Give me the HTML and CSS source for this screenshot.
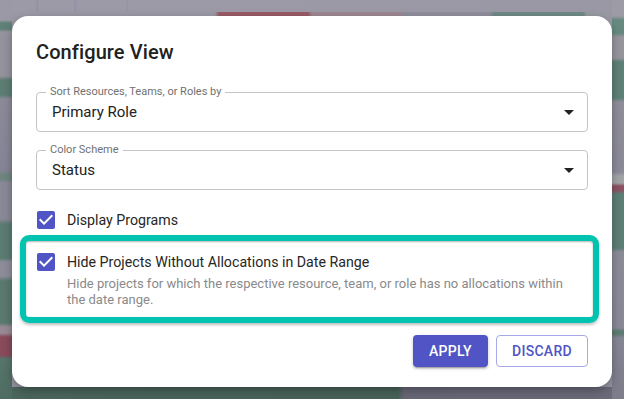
FILE: index.html
```html
<!DOCTYPE html>
<html lang="en">
<head>
<meta charset="utf-8">
<title>Configure View</title>
<link rel="stylesheet" href="styles.css">
</head>
<body>
<div class="backdrop">
  <div class="strip strip-left"></div>
  <div class="strip strip-top"></div>
  <div class="strip strip-right"></div>
  <div class="dialog" role="dialog" aria-labelledby="dlg-title">
    <h2 class="dialog-title" id="dlg-title">Configure View</h2>

    <div class="field field-first">
      <span class="field-label">Sort Resources, Teams, or Roles by</span>
      <span class="field-value">Primary Role</span>
      <svg class="field-arrow" viewBox="0 0 24 24" width="24" height="24"><path d="M7 10l5 5 5-5z"/></svg>
    </div>

    <div class="field field-second">
      <span class="field-label">Color Scheme</span>
      <span class="field-value">Status</span>
      <svg class="field-arrow" viewBox="0 0 24 24" width="24" height="24"><path d="M7 10l5 5 5-5z"/></svg>
    </div>

    <div class="option option-plain">
      <svg class="checkbox" viewBox="0 0 24 24" width="24" height="24"><path d="M19 3H5c-1.11 0-2 .9-2 2v14c0 1.1.89 2 2 2h14c1.11 0 2-.9 2-2V5c0-1.1-.89-2-2-2zm-9 14l-5-5 1.41-1.41L10 14.17l7.59-7.59L19 8l-9 9z"/></svg>
      <div class="option-text">
        <span class="option-label">Display Programs</span>
      </div>
    </div>

    <div class="highlight">
      <div class="option">
        <svg class="checkbox" viewBox="0 0 24 24" width="24" height="24"><path d="M19 3H5c-1.11 0-2 .9-2 2v14c0 1.1.89 2 2 2h14c1.11 0 2-.9 2-2V5c0-1.1-.89-2-2-2zm-9 14l-5-5 1.41-1.41L10 14.17l7.59-7.59L19 8l-9 9z"/></svg>
        <div class="option-text">
          <span class="option-label">Hide Projects Without Allocations in Date Range</span>
          <span class="option-desc">Hide projects for which the respective resource, team, or role has no allocations within the date range.</span>
        </div>
      </div>
    </div>

    <div class="actions">
      <button class="btn btn-primary" type="button">Apply</button>
      <button class="btn btn-outline" type="button">Discard</button>
    </div>
  </div>
  <div class="strip strip-bottom"></div>
</div>
</body>
</html>
```

FILE: styles.css
```css
* { box-sizing: border-box; }

html, body {
  margin: 0;
  padding: 0;
  width: 624px;
  height: 399px;
  overflow: hidden;
  background: #9a98a4;
  font-family: Roboto, "Liberation Sans", Arial, sans-serif;
}

.backdrop {
  display: grid;
  grid-template-columns: 12px 600px 12px;
  grid-template-rows: 16px 371px 12px;
  width: 624px;
  height: 399px;
}

.strip-left {
  grid-column: 1;
  grid-row: 1 / 4;
  background: linear-gradient(to bottom,
    #9b99a5 0px, #9b99a5 20px,
    #5f8177 23px, #5f8177 29px,
    #96949f 32px, #96949f 76px,
    #5e7f75 80px, #5e7f75 95px,
    #8e8c9b 99px, #878698 170px,
    #6f8780 175px, #6f8780 179px,
    #8b8a99 183px, #8b8a99 219px,
    #5c7d73 224px, #5c7d73 258px,
    #8f8e9b 262px, #8f8e9b 276px,
    #5b7b71 281px, #5b7b71 323px,
    #9a8c96 327px, #9a8c96 333px,
    #8a4c5c 337px, #8a4c5c 355px,
    #58776d 359px, #4f6c63 399px);
}

.strip-right {
  grid-column: 3;
  grid-row: 1 / 4;
  background: linear-gradient(to bottom,
    #9d9ba6 0px, #9d9ba6 16px,
    #668a80 20px, #668a80 33px,
    #98969f 37px, #98969f 58px,
    #5f8278 62px, #5f8278 98px,
    #918f9c 102px, #8c8b9a 172px,
    #a3a6a6 176px, #a3a6a6 183px,
    #8e5364 186px, #8e5364 190px,
    #5d8076 194px, #5d8076 248px,
    #8d8c9a 252px, #8b8a99 328px,
    #5f7d74 331px, #5f7d74 334px,
    #888797 338px, #7e7d8c 399px);
}

.strip-top {
  grid-column: 2;
  grid-row: 1;
  background:
    linear-gradient(to right,
      #9b99a5 0px, #9b99a5 203px,
      #9a5a67 207px, #9a5a67 296px,
      #9d8790 300px, #9d8790 388px,
      #8f8e9c 392px, #8f8e9c 478px,
      #6f8984 482px, #6f8984 571px,
      #979aa0 575px, #979aa0 600px) left bottom / 100% 4px no-repeat,
    linear-gradient(to right,
      #9c9aa6 0px, #9c9aa6 24px, #8f8ea0 25px, #9c9aa6 27px,
      #9c9aa6 62px, #8e90b0 63px, #9c9aa6 65px,
      #9c9aa6 114px, #9496a4 115px, #9c9aa6 117px,
      #9c9aa6 200px, #9a98a4 600px);
}

.strip-bottom {
  grid-column: 2;
  grid-row: 3;
  background: linear-gradient(to right,
    #4c685f 0px, #4a665d 386px,
    #6c6b7b 392px, #6e6d7d 600px);
}

.dialog {
  grid-column: 2;
  grid-row: 2;
  background: #ffffff;
  border-radius: 16px;
  padding: 20px 24px 20px 24px;
  display: flex;
  flex-direction: column;
  box-shadow: 0 6px 14px rgba(0, 0, 0, 0.22), 0 2px 5px rgba(0, 0, 0, 0.12);
  position: relative;
  z-index: 1;
}

.dialog-title {
  margin: 0;
  font-size: 20px;
  line-height: 32px;
  font-weight: 500;
  color: #212121;
  letter-spacing: 0.1px;
}

.field {
  position: relative;
  height: 40px;
  border: 1px solid #c4c4c4;
  border-radius: 4px;
  display: flex;
  align-items: center;
  padding: 0 6px 0 15px;
}

.field-first { margin-top: 24px; }
.field-second { margin-top: 18px; }

.field-label {
  position: absolute;
  top: -8px;
  left: 9px;
  padding: 0 4px;
  background: #ffffff;
  font-size: 11px;
  line-height: 13px;
  color: #717171;
  white-space: nowrap;
}

.field-value {
  flex: 1;
  font-size: 15px;
  line-height: 20px;
  color: #222222;
}

.field-arrow {
  fill: #222222;
  flex: none;
}

.option {
  display: flex;
  align-items: flex-start;
  gap: 9px;
}

.option-plain {
  margin-top: 18px;
  margin-left: -2px;
}

.checkbox {
  flex: none;
  fill: #5054c4;
}

.option-text {
  display: flex;
  flex-direction: column;
}

.option-label {
  font-size: 14.2px;
  line-height: 24px;
  color: #262626;
}

.option-desc {
  margin-top: 2px;
  font-size: 13px;
  line-height: 16px;
  color: #8a8a8a;
  max-width: 500px;
}

.highlight {
  margin: 3px -11px 0 -16px;
  border: 6px solid #02c3b0;
  border-radius: 9px;
  padding: 9px 10px 9px 8px;
  box-shadow: 0 2px 3px rgba(0, 0, 0, 0.25), inset 0 1px 2px rgba(0, 0, 0, 0.3);
}

.actions {
  margin-top: 12px;
  display: flex;
  justify-content: flex-end;
  gap: 8px;
}

.btn {
  font-family: Roboto, "Liberation Sans", Arial, sans-serif;
  font-size: 14px;
  font-weight: 500;
  line-height: 20px;
  height: 32px;
  text-transform: uppercase;
  letter-spacing: 0.3px;
  border-radius: 4px;
  cursor: pointer;
}

.btn-primary {
  background: #5054c4;
  color: #ffffff;
  border: none;
  padding: 6px 16px;
  box-shadow: 0 3px 1px -2px rgba(0,0,0,0.2), 0 2px 2px 0 rgba(0,0,0,0.14), 0 1px 5px 0 rgba(0,0,0,0.12);
}

.btn-outline {
  background: #ffffff;
  color: #5054c4;
  border: 1px solid #a6a8e8;
  padding: 5px 15px;
}
```
